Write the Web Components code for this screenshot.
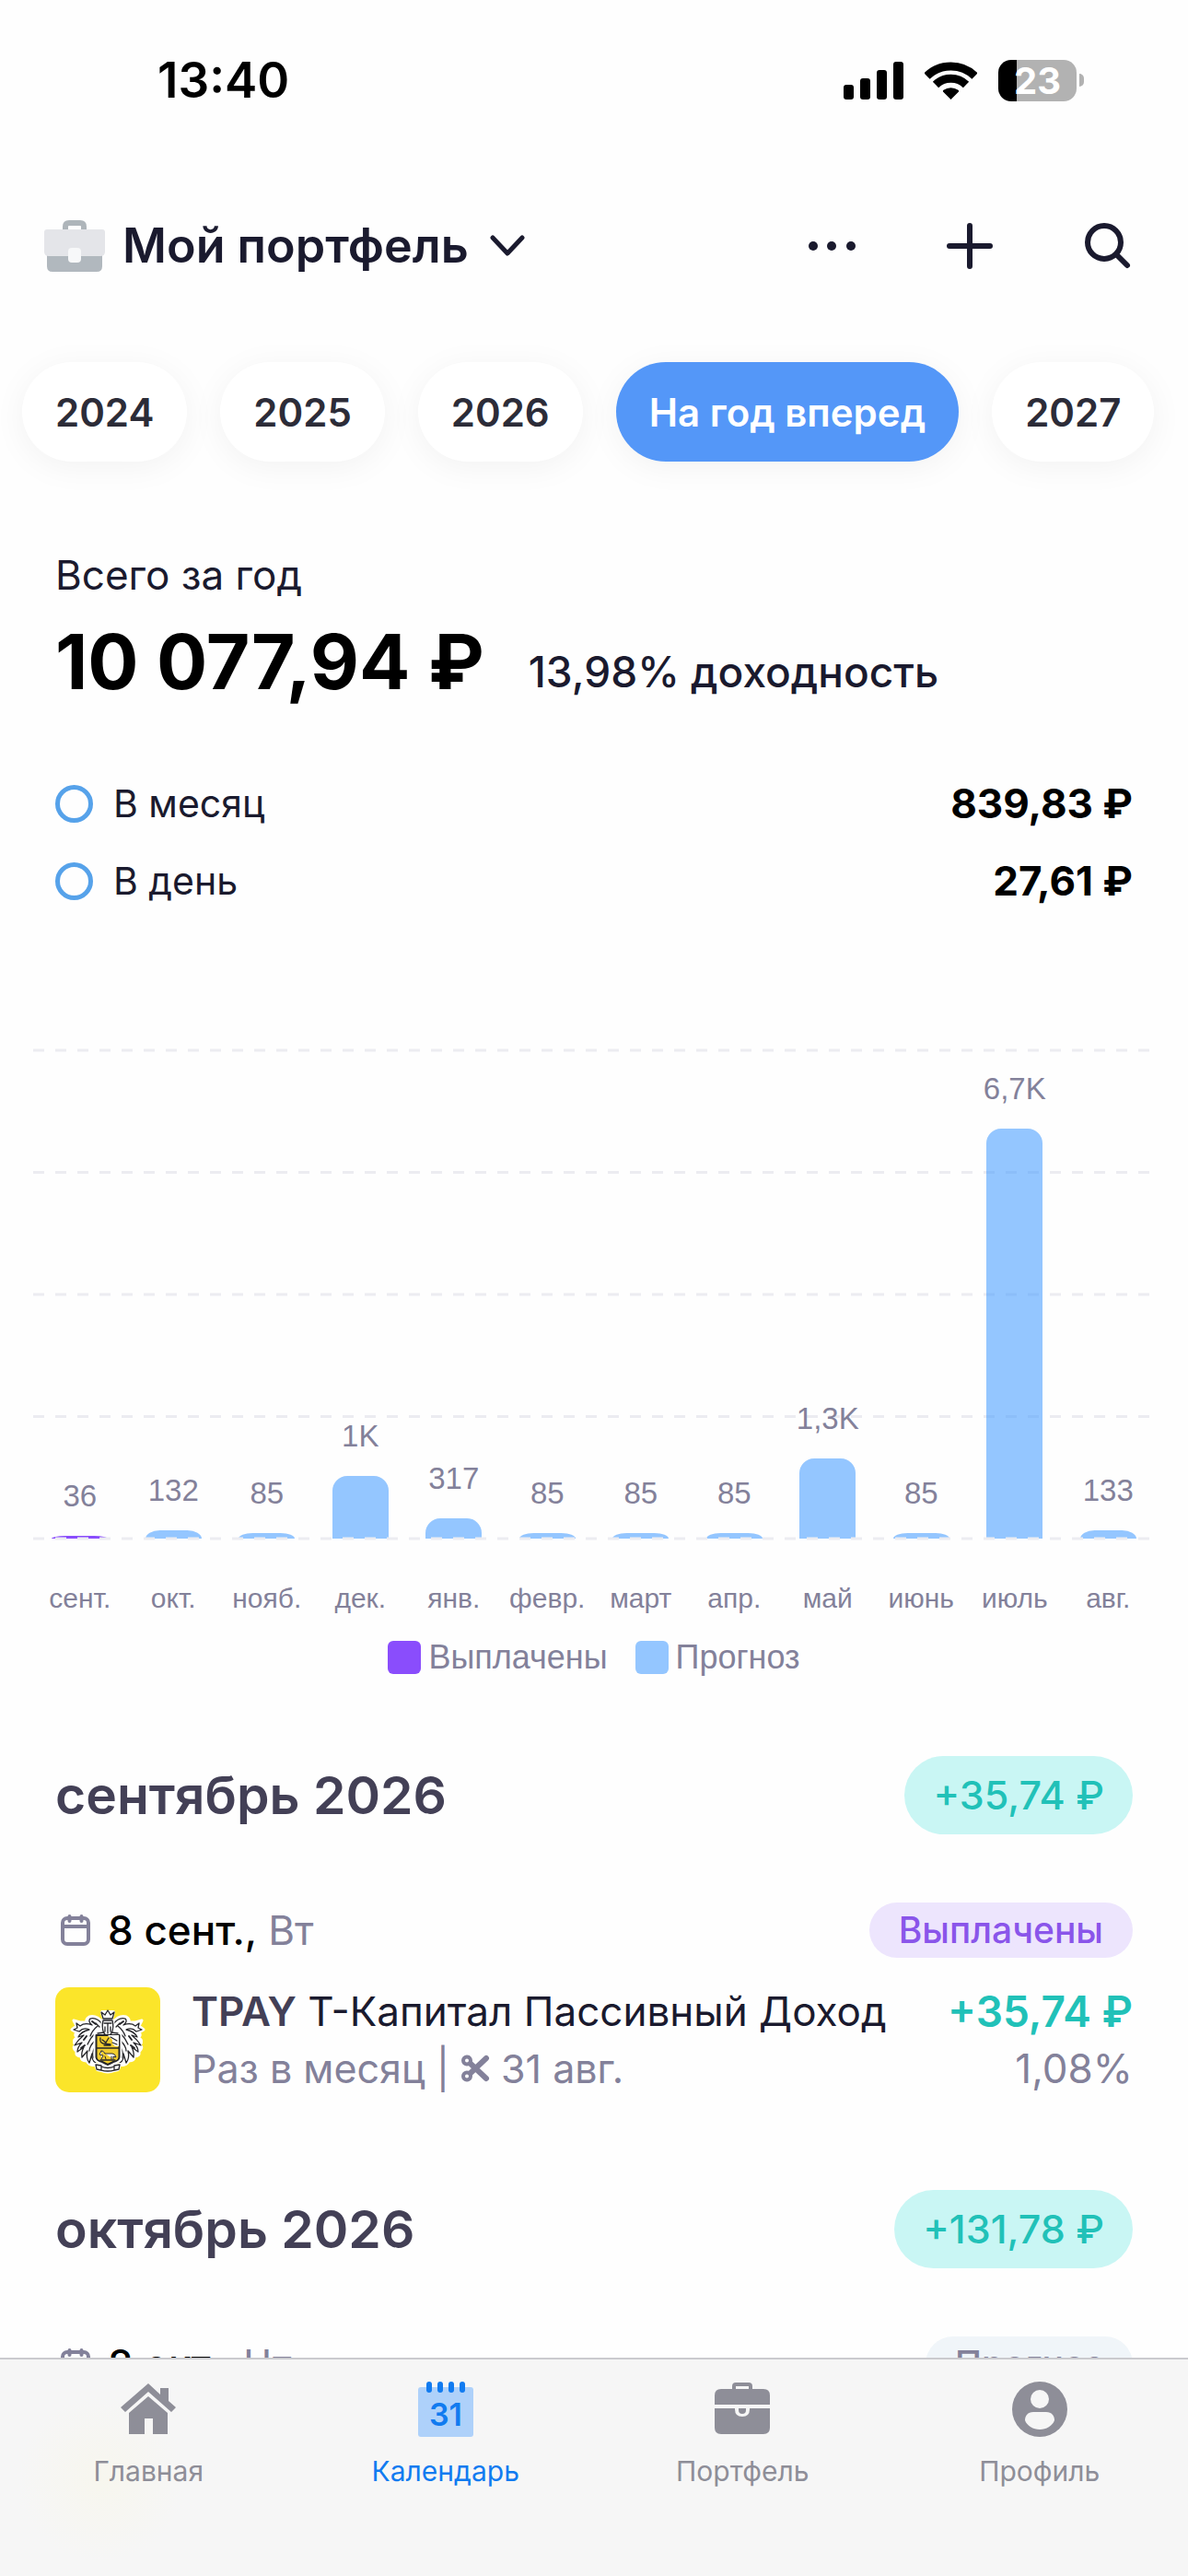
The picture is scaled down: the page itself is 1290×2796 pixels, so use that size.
<!DOCTYPE html>
<html lang="ru">
<head>
<meta charset="utf-8">
<meta name="viewport" content="width=device-width, initial-scale=1">
<title>Мой портфель</title>
<style>
  :root {
    --clr-bg: #fefefe;
    --clr-ink: #1a1a2e;
    --clr-heading: #434056;
    --clr-muted: #83819a;
    --clr-teal: #21c1b8;
    --clr-active: #117bf0;
  }
  body {
    margin: 0;
    background: var(--clr-bg);
    color: var(--clr-ink);
    font-family: Inter, "Liberation Sans", sans-serif;
  }
</style>
</head>
<body>
<app-screen>
  <status-bar slot="top" time="13:40" battery="23"></status-bar>
  <app-header slot="top">Мой портфель</app-header>
  <year-chips years="2024,2025,2026,На год вперед,2027" current="На год вперед"></year-chips>
  <total-summary>
    <span slot="label">Всего за год</span>
    <span slot="total">10 077,94 ₽</span>
    <span slot="yield">13,98% доходность</span>
    <summary-row value="839,83 ₽">В месяц</summary-row>
    <summary-row value="27,61 ₽">В день</summary-row>
  </total-summary>
  <income-chart></income-chart>
  <month-section amount="+35,74 ₽">
    <span slot="title">сентябрь 2026</span>
    <payment-day date="8 сент.," weekday="Вт" status="Выплачены" kind="paid"></payment-day>
    <payment-item amount="+35,74 ₽" percent="1,08%">
      <b slot="ticker">TPAY</b>
      <span slot="name">Т-Капитал Пассивный Доход</span>
      <span slot="period">Раз в месяц |</span>
      <span slot="cutoff">31 авг.</span>
    </payment-item>
  </month-section>
  <month-section amount="+131,78 ₽">
    <span slot="title">октябрь 2026</span>
    <payment-day date="8 окт.," weekday="Чт" status="Прогноз" kind="forecast"></payment-day>
  </month-section>
  <tab-bar slot="bottom"></tab-bar>
</app-screen>

<script>
class AppScreen extends HTMLElement {
  constructor() {
    super();
    this.attachShadow({ mode: "open" });
  }
  connectedCallback() {
    this.shadowRoot.innerHTML = `
      <style>
        :host {
          display: flex;
          flex-direction: column;
          height: 100vh;
        }
        main {
          flex: 1;
          min-height: 0;
          overflow: hidden auto;
          scrollbar-width: none;
        }
      </style>
      <slot name="top"></slot>
      <main><slot></slot></main>
      <slot name="bottom"></slot>
    `;
  }
}

class StatusBar extends HTMLElement {
  constructor() {
    super();
    this.attachShadow({ mode: "open" });
  }
  connectedCallback() {
    this.shadowRoot.innerHTML = `
      <style>
        :host {
          display: flex;
          justify-content: space-between;
          align-items: center;
          height: 174px;
          padding: 0 113px 0 171px;
          color: #000;
        }
        time { font-size: 53px; font-weight: 600; }
        .icons { display: flex; align-items: center; gap: 23px; }
        .battery { display: flex; align-items: center; gap: 3px; }
        .level {
          width: 85px;
          height: 45px;
          border-radius: 14px;
          background: linear-gradient(90deg, #000 20px, #b2b2b2 20px);
          color: #fff;
          font-size: 40px;
          font-weight: 700;
          line-height: 45px;
          text-align: center;
        }
        .nub {
          width: 5px;
          height: 14px;
          border-radius: 0 6px 6px 0;
          background: #b2b2b2;
        }
      </style>
      <time>${this.getAttribute("time")}</time>
      <div class="icons">
        <svg width="65" height="42" viewBox="0 0 65 42" aria-hidden="true">
          <rect y="26" width="11" height="16" rx="3"/>
          <rect x="18" y="19" width="11" height="23" rx="3"/>
          <rect x="36" y="10" width="11" height="32" rx="3"/>
          <rect x="54" y="1" width="11" height="41" rx="3"/>
        </svg>
        <svg width="57" height="42" viewBox="0 0 57 42" aria-hidden="true">
          <g fill="none" stroke="#000" stroke-width="9">
            <path d="M2.5 16.5A37.5 37.5 0 0 1 54.5 16.5"/>
            <path d="M12 26A23.5 23.5 0 0 1 45 26"/>
          </g>
          <path d="M28.5 42L20 33.500Q19.500 32.500 20.500 31.800A13.500 13.500 0 0 1 36.500 31.800Q37.500 32.500 37 33.500Z"/>
        </svg>
        <div class="battery">
          <div class="level">${this.getAttribute("battery")}</div>
          <div class="nub"></div>
        </div>
      </div>
    `;
  }
}

class AppHeader extends HTMLElement {
  constructor() {
    super();
    this.attachShadow({ mode: "open" });
  }
  connectedCallback() {
    this.shadowRoot.innerHTML = `
      <style>
        :host {
          display: flex;
          justify-content: space-between;
          align-items: center;
          height: 186px;
          padding: 0 57px 0 48px;
        }
        button {
          display: flex;
          align-items: center;
          padding: 0;
          border: none;
          background: none;
          color: inherit;
          font: inherit;
          cursor: pointer;
        }
        .portfolio { gap: 19px; }
        h1 { margin: 0; font-size: 52px; font-weight: 600; line-height: 64px; }
        .chevron { margin-left: 4px; }
        nav { display: flex; gap: 90px; }
        svg { display: block; fill: none; stroke: currentColor; stroke-linecap: round; stroke-linejoin: round; }
      </style>
      <button class="portfolio">
        <svg width="66" height="60" viewBox="0 0 66 60" stroke="none" aria-hidden="true">
          <path d="M23 14V9Q23 5 27 5H39Q43 5 43 9V14" stroke="#aeb5ba" stroke-width="6" stroke-linecap="butt"/>
          <path d="M3 38H63V52Q63 58 57 58H9Q3 58 3 52Z" fill="#b1b8be" stroke="none"/>
          <path d="M3 12H63Q66 12 66 15V36Q66 41 61 41H5Q0 41 0 36V15Q0 12 3 12Z" fill="#e4e5e9" stroke="none"/>
          <rect x="26" y="32" width="14" height="16" rx="4" fill="#f7f8f9" stroke="none"/>
        </svg>
        <h1><slot></slot></h1>
        <svg class="chevron" width="38" height="24" viewBox="0 0 38 24" stroke-width="5" aria-hidden="true">
          <path d="M3 3L19 20L35 3"/>
        </svg>
      </button>
      <nav>
        <button aria-label="Ещё">
          <svg width="60" height="60" viewBox="0 0 60 60" aria-hidden="true">
            <g fill="currentColor" stroke="none">
              <circle cx="10" cy="30" r="5"/><circle cx="30" cy="30" r="5"/><circle cx="51" cy="30" r="5"/>
            </g>
          </svg>
        </button>
        <button aria-label="Добавить">
          <svg width="60" height="60" viewBox="0 0 60 60" stroke-width="6" aria-hidden="true">
            <path d="M30 8V52M8 30H52"/>
          </svg>
        </button>
        <button aria-label="Поиск">
          <svg width="60" height="60" viewBox="0 0 60 60" stroke-width="6" aria-hidden="true">
            <circle cx="26" cy="26" r="18"/><path d="M39 39L51 51"/>
          </svg>
        </button>
      </nav>
    `;
  }
}

class YearChips extends HTMLElement {
  constructor() {
    super();
    this.attachShadow({ mode: "open" });
  }
  connectedCallback() {
    var current = this.getAttribute("current");
    var chips = this.getAttribute("years")
      .split(",")
      .map((year) => `<button aria-pressed="${year === current}">${year}</button>`)
      .join("");
    this.shadowRoot.innerHTML = `
      <style>
        :host {
          display: flex;
          gap: 36px;
          padding: 33px 24px 48px;
          overflow: auto hidden;
          scrollbar-width: none;
        }
        button {
          flex: none;
          height: 108px;
          padding: 0 36px;
          border: none;
          border-radius: 54px;
          background: #fff;
          box-shadow: 0 6px 36px rgba(0, 0, 0, 0.05);
          color: #2c2c38;
          font: 600 42px Inter, sans-serif;
          cursor: pointer;
        }
        button[aria-pressed="true"] { background: #5497f8; color: #fff; }
      </style>
      ${chips}
    `;
    this.shadowRoot.addEventListener("click", (e) => {
      var chip = e.target.closest("button");
      if (!chip) return;
      this.shadowRoot.querySelectorAll("button").forEach((button) => {
        button.setAttribute("aria-pressed", button === chip);
      });
    });
  }
}

class TotalSummary extends HTMLElement {
  constructor() {
    super();
    this.attachShadow({ mode: "open" });
  }
  connectedCallback() {
    this.shadowRoot.innerHTML = `
      <style>
        :host { display: block; padding: 47px 60px 0; }
        .label { font-size: 44px; line-height: 56px; }
        .total { display: flex; align-items: flex-end; gap: 48px; margin: 17px 0 61px; }
        .sum { color: #000; font-size: 82px; font-weight: 700; line-height: 100px; }
        .yield { font-size: 46px; font-weight: 500; line-height: 80px; }
      </style>
      <div class="label"><slot name="label"></slot></div>
      <div class="total">
        <div class="sum"><slot name="total"></slot></div>
        <div class="yield"><slot name="yield"></slot></div>
      </div>
      <slot></slot>
    `;
  }
}

class SummaryRow extends HTMLElement {
  constructor() {
    super();
    this.attachShadow({ mode: "open" });
  }
  connectedCallback() {
    this.shadowRoot.innerHTML = `
      <style>
        :host {
          display: flex;
          align-items: center;
          gap: 22px;
          font-size: 41px;
          line-height: 84px;
        }
        i {
          box-sizing: border-box;
          width: 41px;
          height: 41px;
          border: 5px solid #56a2ea;
          border-radius: 50%;
        }
        b { margin-left: auto; color: #000; font-size: 44px; font-weight: 700; }
      </style>
      <i></i><slot></slot><b>${this.getAttribute("value")}</b>
    `;
  }
}

class IncomeChart extends HTMLElement {
  constructor() {
    super();
    this.attachShadow({ mode: "open" });
    this.max = 8000;
    this.data = [
      ["сент.", 50, "36", "paid"],
      ["окт.", 140, "132"],
      ["нояб.", 95, "85"],
      ["дек.", 1025, "1K"],
      ["янв.", 335, "317"],
      ["февр.", 95, "85"],
      ["март", 95, "85"],
      ["апр.", 95, "85"],
      ["май", 1320, "1,3K"],
      ["июнь", 95, "85"],
      ["июль", 6720, "6,7K"],
      ["авг.", 140, "133"],
    ];
  }
  connectedCallback() {
    var line = (y) => `<line x1="0" x2="100%" y1="${y}%" y2="${y}%"/>`;
    var bars = this.data
      .map(
        ([month, value, text, kind]) => `
          <div class="col">
            <span>${text}</span>
            <div class="bar ${kind || ""}" style="height: ${(value / this.max) * 100}%"></div>
          </div>`
      )
      .join("");
    this.shadowRoot.innerHTML = `
      <style>
        :host {
          display: block;
          padding: 142px 36px 0;
          color: var(--clr-muted);
          font-family: "Liberation Sans", sans-serif;
        }
        .plot { position: relative; height: 530px; }
        .cols, .months { display: grid; grid-template-columns: repeat(12, 1fr); text-align: center; }
        .cols { position: relative; height: 100%; }
        .col {
          display: flex;
          flex-direction: column;
          justify-content: flex-end;
          align-items: center;
          height: 530px;
          font-size: 33px;
          line-height: 32px;
        }
        .col span { margin-bottom: 27px; }
        .bar {
          flex: none;
          width: 60%;
          border-radius: 16px 16px 0 0 / min(16px, 100%) min(16px, 100%) 0 0;
          background: rgba(77, 160, 255, 0.6);
        }
        .paid { background: #8a4dfc; }
        svg {
          position: absolute;
          inset: 0;
          width: 100%;
          height: 100%;
          overflow: visible;
          stroke: #ececf1;
          stroke-width: 3;
          stroke-dasharray: 12 12;
        }
        .months { margin-top: 45px; font-size: 30px; line-height: 40px; }
        .legend {
          display: flex;
          justify-content: center;
          gap: 30px;
          margin-top: 22px;
          font-size: 36px;
          line-height: 44px;
        }
        .legend div { display: flex; align-items: center; gap: 8px; }
        .legend i { width: 36px; height: 36px; border-radius: 6px; background: #94c6ff; }
        .legend .paid { background: #8a4dfc; }
      </style>
      <div class="plot">
        <svg aria-hidden="true">${[0, 25, 50, 75].map(line).join("")}</svg>
        <div class="cols">${bars}</div>
        <svg aria-hidden="true">${line(100)}</svg>
      </div>
      <div class="months">${this.data.map(([month]) => `<span>${month}</span>`).join("")}</div>
      <div class="legend">
        <div><i class="paid"></i>Выплачены</div>
        <div><i></i>Прогноз</div>
      </div>
    `;
  }
}

class MonthSection extends HTMLElement {
  constructor() {
    super();
    this.attachShadow({ mode: "open" });
  }
  connectedCallback() {
    this.shadowRoot.innerHTML = `
      <style>
        :host { display: block; padding: 85px 60px 16px; }
        header {
          display: flex;
          justify-content: space-between;
          align-items: center;
          margin-bottom: 74px;
        }
        h2 { margin: 0; color: var(--clr-heading); font-size: 57px; font-weight: 600; line-height: 72px; }
        .amount {
          padding: 0 31px;
          border-radius: 43px;
          background: #c9f6f4;
          color: var(--clr-teal);
          font-size: 43px;
          font-weight: 500;
          line-height: 85px;
        }
      </style>
      <header>
        <h2><slot name="title"></slot></h2>
        <div class="amount">${this.getAttribute("amount")}</div>
      </header>
      <slot></slot>
    `;
  }
}

class PaymentDay extends HTMLElement {
  constructor() {
    super();
    this.attachShadow({ mode: "open" });
  }
  connectedCallback() {
    this.shadowRoot.innerHTML = `
      <style>
        :host {
          display: flex;
          align-items: center;
          font-size: 44px;
          line-height: 60px;
          color: var(--clr-muted);
        }
        svg { margin: 0 18px 0 5px; fill: none; stroke: currentColor; stroke-width: 4; stroke-linecap: round; }
        time { margin-right: 12px; color: #000; font-weight: 500; }
        .badge {
          margin-left: auto;
          padding: 0 32px;
          border-radius: 30px;
          background: #f0f5f9;
          font-size: 39px;
          font-weight: 500;
        }
        .paid { background: #ede5fd; color: #8a55ea; }
      </style>
      <svg width="34" height="36" viewBox="0 0 34 36" aria-hidden="true">
        <rect x="3" y="5" width="28" height="28" rx="5"/>
        <path d="M3 14H31M10.500 3V8M23.500 3V8"/>
      </svg>
      <time>${this.getAttribute("date")}</time>${this.getAttribute("weekday")}
      <span class="badge ${this.getAttribute("kind")}">${this.getAttribute("status")}</span>
    `;
  }
}

class PaymentItem extends HTMLElement {
  constructor() {
    super();
    this.attachShadow({ mode: "open" });
  }
  connectedCallback() {
    // one side of the mantling, mirrored for the other
    var mantling = `
      <path fill="#fff" stroke="#fff" stroke-width="3" stroke-linejoin="round" d="M51 38Q45 30 37 32Q33 34 34 38L27 38L20 36L23 42L18 46L23 49Q20 52 24 55Q18 57 22 63Q18 65 23 70Q22 75 28 75Q28 80 34 80Q38 86 43 84L47 58Z"/>
      <path d="M51 40Q45 32 38 34Q35 37 40 41Q32 38 27 42L23 39L24 44L20 46L26 48Q31 43 37 46Q28 48 25 54L31 52Q25 57 21 63L29 60Q24 65 24 70L31 65Q28 71 29 76L35 69Q33 77 37 82L40 72Q39 79 44 82"/>
      <path d="M46 42Q40 47 38 53M44 49Q38 55 35 62M43 58Q37 64 37 69M43 65Q39 72 42 77M44 39L48 43"/>
      <path d="M40 37L44 40M34 53L31 57M28 66L32 63" stroke-width="2"/>`;
    this.shadowRoot.innerHTML = `
      <style>
        :host {
          display: flex;
          align-items: center;
          margin-top: 27px;
          font-size: 44px;
          line-height: 62px;
        }
        .logo { flex: none; margin-right: 34px; }
        .text { flex: 1; }
        .sub { display: flex; align-items: center; gap: 12px; font-size: 43px; color: var(--clr-muted); }
        ::slotted(b) { color: var(--clr-heading); font-weight: 600; }
        .sums { text-align: right; color: var(--clr-muted); }
        .sums b { display: block; color: var(--clr-teal); font-size: 46px; font-weight: 600; }
      </style>
      <svg class="logo" width="114" height="114" viewBox="0 0 114 114" aria-hidden="true">
        <rect width="114" height="114" rx="15" fill="#fbe52a"/>
        <g fill="none" stroke="#26262a" stroke-width="1.300" stroke-linecap="round" stroke-linejoin="round">
          <g>${mantling}</g>
          <g transform="matrix(-1 0 0 1 114 0)">${mantling}</g>
          <path fill="#fff" stroke="#fff" stroke-width="5" d="M44 50H70V78Q64 82 57 85Q50 82 44 78Z"/>
          <path fill="#fff" stroke="#fff" stroke-width="4" d="M51 27L63 27L61 34Q64 40 62 50H52Q50 40 53 34Z"/>
          <path fill="#fff" d="M52 34L50 27L54 30L57 25L60 30L64 27L62 34Z"/>
          <path fill="#fff" d="M52 36H62Q64 44 61 50L57 54L53 50Q50 44 52 36Z"/>
          <path d="M53 39H61M57 39V50M54 43V48M60 43V48M46 50L53 49M68 50L61 49"/>
          <path d="M44.500 52H69.500V76Q69 80 63 81L57 84L51 81Q45 80 44.500 76Z" fill="#f1cd2e" stroke-width="2"/>
          <path d="M57 52H69V64H65L62 61V57Z" fill="#fff" stroke="none"/>
          <path d="M45 66H69M49 55Q48 60 52 61L60 62M51 57L55 60L58 55M53 63H60M60 54L67 58M62 60L67 62"/>
          <path d="M50 69Q52 68 54 72H62Q65 72 66 76L63 75V78M50 69L48 73L52 74L50 78M54 75L55 78M61 75V78" fill="#fff" stroke-width="1"/>
          <path d="M49 79H65"/>
          <path fill="#fff" stroke="#fff" stroke-width="4" d="M44 84L50 85Q57 89 64 85L70 84L68 89L64 90Q57 93 50 90L46 89Z"/>
          <path fill="#fff" d="M44 84L50 85V90L45 89ZM70 84L64 85V90L69 89ZM50 86Q57 89 64 86V90Q57 92 50 90Z"/>
        </g>
      </svg>
      <div class="text">
        <div><slot name="ticker"></slot> <slot name="name"></slot></div>
        <div class="sub">
          <slot name="period"></slot>
          <svg width="32" height="32" viewBox="0 0 32 32" fill="none" stroke="currentColor" stroke-width="4" stroke-linecap="round" aria-hidden="true">
            <circle cx="7" cy="7.500" r="4"/><circle cx="7" cy="24.500" r="4"/>
            <path d="M11 11L28 27M11 21L28 5" stroke-width="6"/>
          </svg>
          <slot name="cutoff"></slot>
        </div>
      </div>
      <div class="sums"><b>${this.getAttribute("amount")}</b>${this.getAttribute("percent")}</div>
    `;
  }
}

class TabBar extends HTMLElement {
  constructor() {
    super();
    this.attachShadow({ mode: "open" });
  }
  connectedCallback() {
    this.shadowRoot.innerHTML = `
      <style>
        :host {
          display: block;
          border-top: 2px solid #cacace;
          background: radial-gradient(circle at 110px 130px, #f7f6ee, #f6f6f6 90px);
        }
        nav { display: grid; grid-template-columns: repeat(4, 1fr); height: 211px; padding-top: 24px; }
        a {
          display: flex;
          flex-direction: column;
          align-items: center;
          gap: 17px;
          color: #8e8e98;
          font-size: 30px;
          line-height: 40px;
          text-decoration: none;
        }
        a[aria-current] { color: var(--clr-active); }
        svg { fill: currentColor; }
        .day { font-size: 34px; font-weight: 600; text-anchor: middle; }
      </style>
      <nav>
        <a href="#home">
          <svg width="60" height="60" viewBox="0 0 60 60" aria-hidden="true">
            <path d="M30 2L43 14V7H52V21L60 28L55 33L30 11L5 33L0 28Z"/>
            <path d="M30 16L51 34V57H35V40H26V57H9V34Z"/>
          </svg>
          Главная
        </a>
        <a href="#calendar" aria-current="page">
          <svg width="60" height="60" viewBox="0 0 60 60" aria-hidden="true">
            <rect y="6" width="60" height="54" rx="3" fill="#aed1fa"/>
            <g><rect x="9" width="6" height="12" rx="3"/><rect x="21" width="6" height="12" rx="3"/><rect x="33" width="6" height="12" rx="3"/><rect x="45" width="6" height="12" rx="3"/></g>
            <text class="day" x="30" y="48">31</text>
          </svg>
          Календарь
        </a>
        <a href="#portfolio">
          <svg width="60" height="60" viewBox="0 0 60 60" aria-hidden="true">
            <path d="M21 9V5Q21 3 23 3H37Q39 3 39 5V9" fill="none" stroke="currentColor" stroke-width="4"/>
            <path d="M7 8H53Q60 8 60 15V25H0V15Q0 8 7 8Z"/>
            <path d="M0 29H60V50Q60 57 53 57H7Q0 57 0 50Z"/>
            <path d="M22 25H38V30Q38 38 30 38Q22 38 22 30Z" fill="#f6f6f6"/>
            <path d="M26 29H34V31Q34 35 30 35Q26 35 26 31Z"/>
          </svg>
          Портфель
        </a>
        <a href="#profile">
          <svg width="60" height="60" viewBox="0 0 60 60" aria-hidden="true">
            <circle cx="30" cy="30" r="30"/>
            <g fill="#f6f6f6">
              <circle cx="30" cy="19" r="10"/>
              <path d="M23 33H37C43 33 46 37 46 42C44 48 37 52 30 52C23 52 16 48 14 42C14 37 17 33 23 33Z"/>
            </g>
          </svg>
          Профиль
        </a>
      </nav>
    `;
  }
}

customElements.define("app-screen", AppScreen);
customElements.define("status-bar", StatusBar);
customElements.define("app-header", AppHeader);
customElements.define("year-chips", YearChips);
customElements.define("total-summary", TotalSummary);
customElements.define("summary-row", SummaryRow);
customElements.define("income-chart", IncomeChart);
customElements.define("month-section", MonthSection);
customElements.define("payment-day", PaymentDay);
customElements.define("payment-item", PaymentItem);
customElements.define("tab-bar", TabBar);
</script>
</body>
</html>
